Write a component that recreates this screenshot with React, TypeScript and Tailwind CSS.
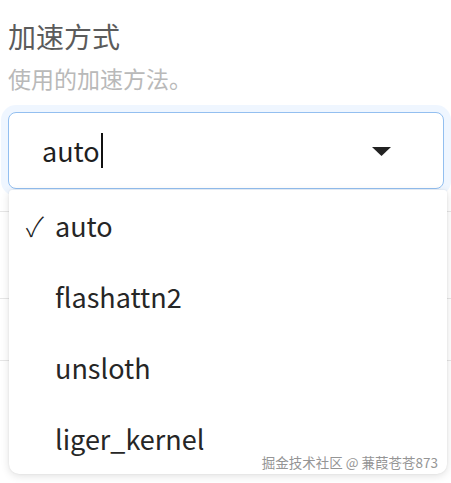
const options = ['auto', 'flashattn2', 'unsloth', 'liger_kernel'];

export default function App() {
  const selected = 'auto';

  return (
    <div
      className="relative w-[451px] h-[483px] overflow-hidden bg-white px-2"
      style={{ fontFamily: '"Noto Sans CJK SC", "Noto Sans", sans-serif' }}
    >
      {/* Label */}
      <div className="pt-[18px] text-[28px] leading-[36px] text-[#5b5b5b]">加速方式</div>
      <div className="mt-[9px] text-[23px] leading-[30px] text-[#b9b9b9]">使用的加速方法。</div>

      {/* Select input (focused) */}
      <div className="mt-[19px] mr-[-1px] h-[77px] rounded-[8px] border-[1.5px] border-[#93bff0] bg-white shadow-[0_0_0_7px_rgba(219,234,254,0.45)] flex items-center pl-[33px] pr-[52px]">
        <span className="text-[27px] leading-none text-[#1f1f1f]">{selected}</span>
        <span className="ml-[1px] w-[2px] h-[35px] bg-[#111]" />
        <div className="flex-1" />
        <svg width="19" height="9" viewBox="0 0 19 9" className="mt-[2px]">
          <path d="M0 0 L19 0 L9.5 9 Z" fill="#222" />
        </svg>
      </div>

      {/* Table rows behind the dropdown */}
      <div className="-mx-2 mt-[22px] h-[88px] border-t border-b border-[#e6e6e6]" />
      <div className="-mx-2 h-[62px] border-b border-[#e6e6e6]" />
      <div className="h-[111px] ml-[16px] flex flex-col justify-end">
        <div className="h-[10px] border-l border-[#e0e0e0]" />
      </div>

      {/* Dropdown menu */}
      <ul className="absolute left-[9px] top-[190px] w-[438px] h-[284px] bg-white rounded-b-[10px] rounded-t-[3px] shadow-[0_2px_8px_rgba(0,0,0,0.12),0_0_2px_rgba(0,0,0,0.08)] flex flex-col">
        {options.map((opt) => (
          <li key={opt} className="h-[71px] flex items-center pl-[17px] text-[27px] leading-none text-[#262626]">
            <span className="w-[29px] text-[27px] text-[#222] font-light">
              {opt === selected ? '✓' : ''}
            </span>
            <span>{opt}</span>
          </li>
        ))}
      </ul>

      {/* Watermark */}
      <div
        className="absolute right-[13px] top-[453px] text-[13.5px] leading-[18px] text-[#959595]"
        style={{ textShadow: '0 0 2px #fff, 0 0 1px #fff' }}
      >
        掘金技术社区 @ 蒹葭苍苍873
      </div>
    </div>
  );
}
